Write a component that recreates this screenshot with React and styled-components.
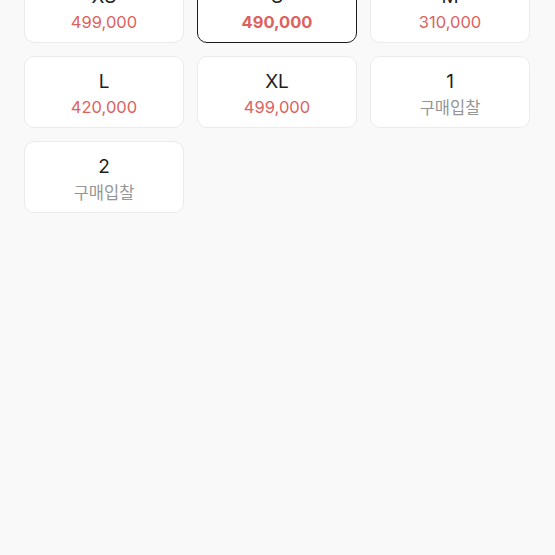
import styled, { createGlobalStyle } from "styled-components";

const GlobalStyle = createGlobalStyle`
  html, body {
    margin: 0;
    padding: 0;
    background-color: #f9f9f9;
    font-family: Inter, "Noto Sans CJK KR", sans-serif;
  }
`;

const Page = styled.div`
  height: 555px;
  overflow: hidden;
  background-color: #f9f9f9;
`;

const Grid = styled.div`
  display: grid;
  grid-template-columns: repeat(3, 160px);
  column-gap: 13px;
  row-gap: 13px;
  padding: 0 25px 0 24px;
  margin-top: -29px;
`;

const Card = styled.div`
  box-sizing: border-box;
  height: 72px;
  padding-top: 3px;
  background-color: #fff;
  border: ${(p) => (p.$selected ? "1.5px solid #1a1a1a" : "1px solid #ebebeb")};
  border-radius: 10px;
  display: flex;
  flex-direction: column;
  align-items: center;
  justify-content: center;
  gap: 2px;
`;

const Size = styled.div`
  font-size: 19px;
  line-height: 24px;
  color: #1e1e1e;
`;

const Price = styled.div`
  font-size: 16.5px;
  line-height: 22px;
  color: ${(p) => (p.$bid ? "#959595" : "#dd625d")};
  font-weight: ${(p) => (p.$selected ? 700 : 400)};
  font-family: ${(p) =>
    p.$bid ? '"Noto Sans CJK KR", sans-serif' : "Inter, sans-serif"};
`;

const items = [
  { size: "XS", price: "499,000" },
  { size: "S", price: "490,000", selected: true },
  { size: "M", price: "310,000" },
  { size: "L", price: "420,000" },
  { size: "XL", price: "499,000" },
  { size: "1", price: "구매입찰", bid: true },
  { size: "2", price: "구매입찰", bid: true },
];

export default function App() {
  return (
    <>
      <GlobalStyle />
      <Page>
        <Grid>
          {items.map((item, i) => (
            <Card key={i} $selected={item.selected}>
              <Size>{item.size}</Size>
              <Price $bid={item.bid} $selected={item.selected}>
                {item.price}
              </Price>
            </Card>
          ))}
        </Grid>
      </Page>
    </>
  );
}
